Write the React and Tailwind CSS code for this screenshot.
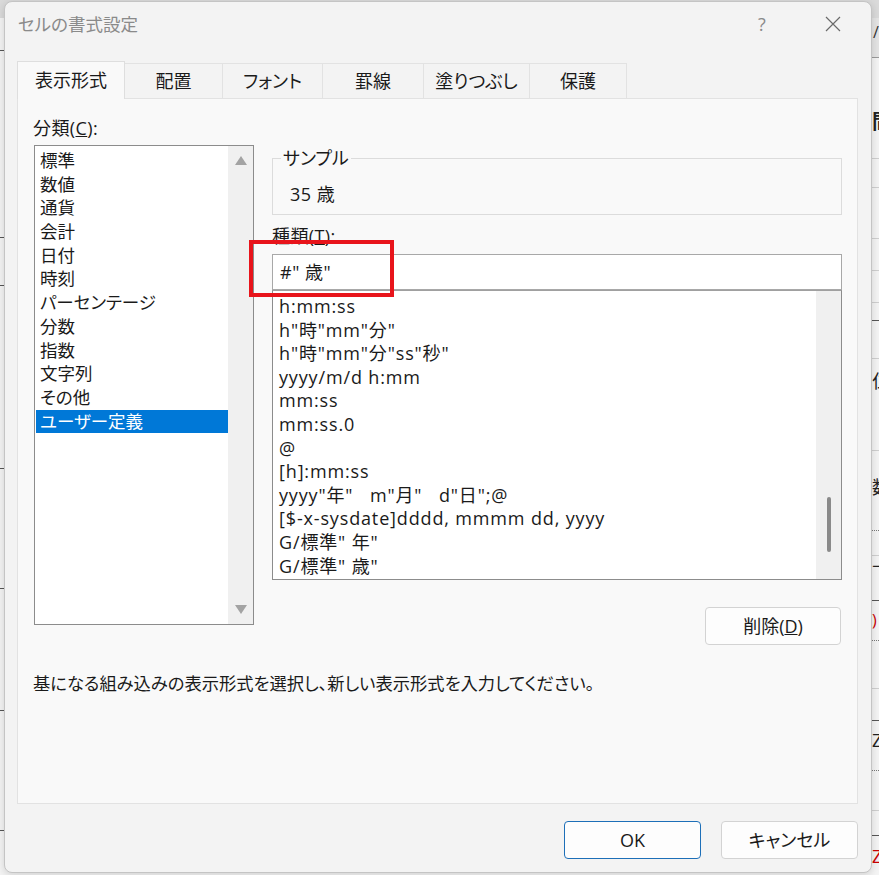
import React from "react";

const categories = [
  "標準",
  "数値",
  "通貨",
  "会計",
  "日付",
  "時刻",
  "パーセンテージ",
  "分数",
  "指数",
  "文字列",
  "その他",
  "ユーザー定義",
];

const formats = [
  "h:mm:ss",
  'h"時"mm"分"',
  'h"時"mm"分"ss"秒"',
  "yyyy/m/d h:mm",
  "mm:ss",
  "mm:ss.0",
  "@",
  "[h]:mm:ss",
  'yyyy"年"   m"月"   d"日";@',
  "[$-x-sysdate]dddd, mmmm dd, yyyy",
  'G/標準" 年"',
  'G/標準" 歳"',
];

const tabs = [
  { label: "配置", w: "w-[98px]" },
  { label: "フォント", w: "w-[100px]" },
  { label: "罫線", w: "w-[101px]" },
  { label: "塗りつぶし", w: "w-[106px]" },
  { label: "保護", w: "w-[97px]" },
];

function Background() {
  return (
    <div className="absolute inset-0 bg-[#f4f4f4]">
      <div className="absolute left-0 top-0 w-full h-[18px] bg-[#dadada]" />
      <div className="absolute left-[872px] top-[18px] w-[7px] h-[40px] bg-[#e4e4e4] border-b border-[#9a9a9a]" />
      <div className="absolute left-[873px] top-[20px] text-[16px] text-[#333]">/</div>
      <div className="absolute left-[872px] top-[112px] text-[20px] font-bold leading-none text-[#222]">間</div>
      {[158, 187, 238, 270, 302, 358, 450, 555, 688, 810].map((y) => (
        <div key={y} className="absolute left-[872px] w-[7px] h-px bg-[#cfcfcf]" style={{ top: y }} />
      ))}
      {[320, 600, 720, 835].map((y) => (
        <div key={y} className="absolute left-[872px] w-[7px] h-px bg-[#555]" style={{ top: y }} />
      ))}
      {[530, 640, 770].map((y) => (
        <div key={y} className="absolute left-[872px] w-[7px] border-t border-dotted border-[#777]" style={{ top: y }} />
      ))}
      <div className="absolute left-[872px] top-[372px] text-[18px] leading-none text-[#222]">仁</div>
      <div className="absolute left-[872px] top-[478px] text-[18px] leading-none text-[#222]">数</div>
      <div className="absolute left-[872px] top-[550px] text-[18px] leading-none text-[#222]">上</div>
      <div className="absolute left-[872px] top-[612px] text-[16px] leading-none text-[#c00]">)</div>
      <div className="absolute left-[872px] top-[731px] text-[18px] leading-none text-[#222]">Z</div>
      <div className="absolute left-[872px] top-[847px] text-[18px] leading-none text-[#c00]">Z</div>
      {[50, 237, 285, 468, 588, 710, 830].map((y) => (
        <div key={y} className="absolute left-0 w-[4px] h-px bg-[#555]" style={{ top: y }} />
      ))}
    </div>
  );
}

export default function App() {
  return (
    <div className="relative w-[879px] h-[875px] overflow-hidden font-['Open_Sans','Noto_Sans_CJK_JP',sans-serif] [font-feature-settings:'palt'] text-[#1a1a1a]">
      <Background />
      <div className="absolute left-[4px] top-[1px] w-[868px] h-[872px] rounded-[8px] border border-[#c4c4c4] bg-[#f3f3f3] shadow-[0_2px_8px_rgba(0,0,0,0.15)] flex flex-col overflow-hidden">
        {/* title bar */}
        <div className="h-[59px] flex items-start justify-between pl-[13px] pr-[15px] pt-[10px] shrink-0">
          <div className="text-[17.5px] leading-[24px] text-[#8a8a8a]">セルの書式設定</div>
          <div className="flex items-center">
            <div className="w-[46px] h-[24px] flex items-center justify-center text-[18px] text-[#8a8a8a]">?</div>
            <div className="ml-[25px] w-[46px] h-[24px] flex items-center justify-center">
              <svg width="16" height="16" viewBox="0 0 16 16">
                <path d="M1 1 L15 15 M15 1 L1 15" stroke="#6a6a6a" strokeWidth="1.2" fill="none" />
              </svg>
            </div>
          </div>
        </div>

        {/* tabs */}
        <div className="flex items-end h-[37px] pl-[12px] shrink-0">
          <div className="relative z-10 w-[108px] h-[38px] -mb-px bg-[#f9f9f9] border border-b-0 border-[#dedede] flex items-center justify-center text-[18px]">
            表示形式
          </div>
          {tabs.map((t) => (
            <div
              key={t.label}
              className={`${t.w} h-[35px] border border-l-0 border-b-0 border-[#e2e2e2] flex items-center justify-center text-[18px]`}
            >
              {t.label}
            </div>
          ))}
        </div>

        {/* panel */}
        <div className="ml-[12px] w-[841px] h-[706px] bg-[#f9f9f9] border border-[#e2e2e2] pt-[17px] pl-[15px] shrink-0">
          <div className="flex items-start">
            {/* left column */}
            <div className="w-[221px] flex flex-col">
              <div className="text-[18px] leading-[24px] tracking-[0.4px]">
                分類(<span className="underline">C</span>):
              </div>
              <div className="mt-[5px] ml-px h-[480px] border border-[#8c8c8c] bg-white flex">
                <div className="flex-1 pt-[3px] pl-px">
                  {categories.map((c) => (
                    <div
                      key={c}
                      className={`h-[23.7px] leading-[23.7px] pl-[4px] text-[17.5px] whitespace-nowrap ${
                        c === "ユーザー定義" ? "bg-[#0078d7] text-white" : ""
                      }`}
                    >
                      {c}
                    </div>
                  ))}
                </div>
                <div className="w-[25px] bg-[#f0f0f0] flex flex-col items-center justify-between pt-[10px] pb-[10px]">
                  <svg width="12" height="9" viewBox="0 0 12 9">
                    <path d="M6 0 L12 9 L0 9 Z" fill="#a3a3a3" />
                  </svg>
                  <svg width="12" height="9" viewBox="0 0 12 9">
                    <path d="M0 0 L12 0 L6 9 Z" fill="#a3a3a3" />
                  </svg>
                </div>
              </div>
            </div>

            {/* right column */}
            <div className="ml-[18px] w-[570px] flex flex-col mt-[30px]">
              <fieldset className="border border-[#dcdcdc] pl-[8px] pb-[8px] h-[69px]">
                <legend className="px-[2px] text-[18px] leading-[24px]">サンプル</legend>
                <div className="ml-[9px] mt-[12px] text-[18px] leading-[24px] tracking-[0.5px]">35 歳</div>
              </fieldset>
              <div className="mt-[9px] text-[18px] leading-[24px] tracking-[0.4px]">
                種類(<span className="underline">T</span>):
              </div>
              <div className="relative mt-[6px] h-[36px] border border-[#a8a8a8] bg-white pl-[7px] flex items-center text-[18px] tracking-[0.5px]">
                #" 歳"
                <div className="absolute left-[-24px] top-[-15px] w-[145px] h-[57px] border-[4px] border-[#e8141b]" />
              </div>
              <div className="h-[290px] border border-[#8c8c8c] border-t-[#a0a0a0] bg-white flex">
                <div className="flex-1 pt-[4px] pl-[6px]">
                  {formats.map((f) => (
                    <div key={f} className="h-[23.6px] leading-[23.6px] text-[18px] tracking-[0.85px] whitespace-pre">
                      {f}
                    </div>
                  ))}
                </div>
                <div className="w-[25px] bg-[#f0f0f0] flex justify-center pt-[206px]">
                  <div className="w-[4px] h-[55px] rounded-full bg-[#8a8a8a]" />
                </div>
              </div>
              <div className="mt-[27px] self-end mr-px w-[136px] h-[38px] rounded-[4px] border border-[#d3d3d3] bg-[#fdfdfd] flex items-center justify-center text-[18px]">
                削除(<span className="underline">D</span>)
              </div>
            </div>
          </div>
          <div className="mt-[27px] text-[17.3px] leading-[24px] whitespace-nowrap">
            基になる組み込みの表示形式を選択し、新しい表示形式を入力してください。
          </div>
        </div>

        {/* bottom buttons */}
        <div className="flex justify-end pr-[13px] pt-[17px] gap-[20px]">
          <div className="w-[137px] h-[38px] rounded-[4px] border-[1.5px] border-[#1d6fb8] bg-[#fdfdfd] flex items-center justify-center text-[18px]">
            OK
          </div>
          <div className="w-[137px] h-[38px] rounded-[4px] border border-[#d3d3d3] bg-[#fdfdfd] flex items-center justify-center text-[18px]">
            キャンセル
          </div>
        </div>
      </div>
    </div>
  );
}
